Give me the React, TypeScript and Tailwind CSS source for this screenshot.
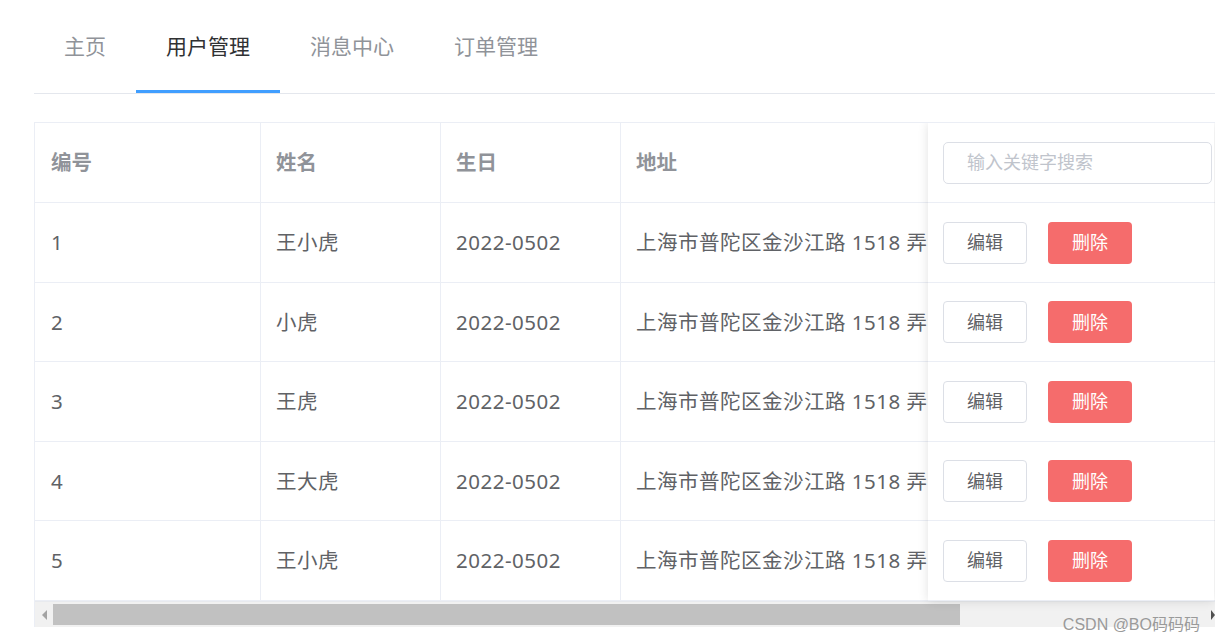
const tabs = ['主页', '用户管理', '消息中心', '订单管理'];

const rows = [
  { id: 1, name: '王小虎', h: 'h-[80px]' },
  { id: 2, name: '小虎', h: 'h-[79px]' },
  { id: 3, name: '王虎', h: 'h-[80px]' },
  { id: 4, name: '王大虎', h: 'h-[79px]' },
  { id: 5, name: '王小虎', h: 'h-[80px]' },
];

const font = "font-['Noto_Sans','Noto_Sans_CJK_SC',sans-serif]";

function Row({ h, cells, head }: { h: string; cells: string[]; head?: boolean }) {
  const tone = head ? 'font-bold text-[#909399]' : 'text-[#606266] tracking-[0.5px]';
  return (
    <div className={`flex ${h} border-b border-[#ebeef5] text-[20.5px] ${tone}`}>
      <div className="w-[226px] shrink-0 flex items-center pl-[16px] border-r border-[#ebeef5]">{cells[0]}</div>
      <div className="w-[180px] shrink-0 flex items-center pl-[15px] border-r border-[#ebeef5]">{cells[1]}</div>
      <div className="w-[180px] shrink-0 flex items-center pl-[15px] border-r border-[#ebeef5]">{cells[2]}</div>
      <div className="w-[600px] shrink-0 flex items-center pl-[15px] whitespace-nowrap">{cells[3]}</div>
    </div>
  );
}

export default function App() {
  return (
    <div className={`relative w-[1215px] h-[642px] overflow-hidden bg-white ${font}`}>
      <div className="pl-[34px]">
        {/* tabs */}
        <nav className="flex h-[94px] border-b border-[#e4e7ed]">
          {tabs.map((t, i) => (
            <div
              key={t}
              className={`relative flex h-full items-center px-[30px] pt-[1px] text-[21px] ${
                i === 1 ? 'text-[#303133]' : 'text-[#909399]'
              }`}
            >
              {t}
              {i === 1 && <div className="absolute left-0 right-0 bottom-0 h-[3px] bg-[#409eff]" />}
            </div>
          ))}
        </nav>

        {/* table */}
        <div className="mt-[28px] relative w-[1181px] border-l border-t border-[#ebeef5] overflow-hidden">
          <Row h="h-[80px]" head cells={['编号', '姓名', '生日', '地址']} />
          {rows.map((r) => (
            <Row
              key={r.id}
              h={r.h}
              cells={[String(r.id), r.name, '2022-0502', '上海市普陀区金沙江路 1518 弄']}
            />
          ))}

          {/* fixed right column */}
          <div className="absolute top-0 left-[893px] w-[286px] h-[478px] bg-white shadow-[0_0_10px_rgba(0,0,0,0.12)]">
            <div className="h-[80px] border-b border-[#ebeef5] flex items-center pl-[15px] pr-[2px]">
              <div className="w-full h-[42px] rounded-[5px] border border-[#dcdfe6] flex items-center pl-[23px] text-[18px] text-[#c0c4cc]">
                输入关键字搜索
              </div>
            </div>
            {rows.map((r) => (
              <div key={r.id} className={`${r.h} border-b border-[#ebeef5] flex items-center pl-[15px] gap-[21px]`}>
                <button className="w-[84px] h-[42px] rounded-[4px] border border-[#dcdfe6] bg-white text-[18px] text-[#606266]">
                  编辑
                </button>
                <button className="w-[84px] h-[42px] rounded-[4px] bg-[#f56c6c] text-[18px] text-white">
                  删除
                </button>
              </div>
            ))}
          </div>

          {/* scrollbar */}
          <div className="flex h-[26px] bg-[#f1f1f1] border-t border-[#e8eaee] py-[2px]">
            <div className="w-[18px] flex items-center justify-center">
              <div className="w-0 h-0 border-y-[5px] border-y-transparent border-r-[5px] border-r-[#a3a3a3]" />
            </div>
            <div className="w-[907px] bg-[#c1c1c1]" />
            <div className="flex-1" />
            <div className="w-[4px] flex items-center">
              <div className="w-0 h-0 border-y-[5px] border-y-transparent border-l-[4px] border-l-[#505050]" />
            </div>
          </div>
        </div>
      </div>

      <div className="absolute right-[15px] top-[613px] text-[16px] text-[#9a9a9a] font-['Liberation_Sans','Noto_Sans_CJK_SC',sans-serif]">
        CSDN @BO码码码
      </div>
    </div>
  );
}
